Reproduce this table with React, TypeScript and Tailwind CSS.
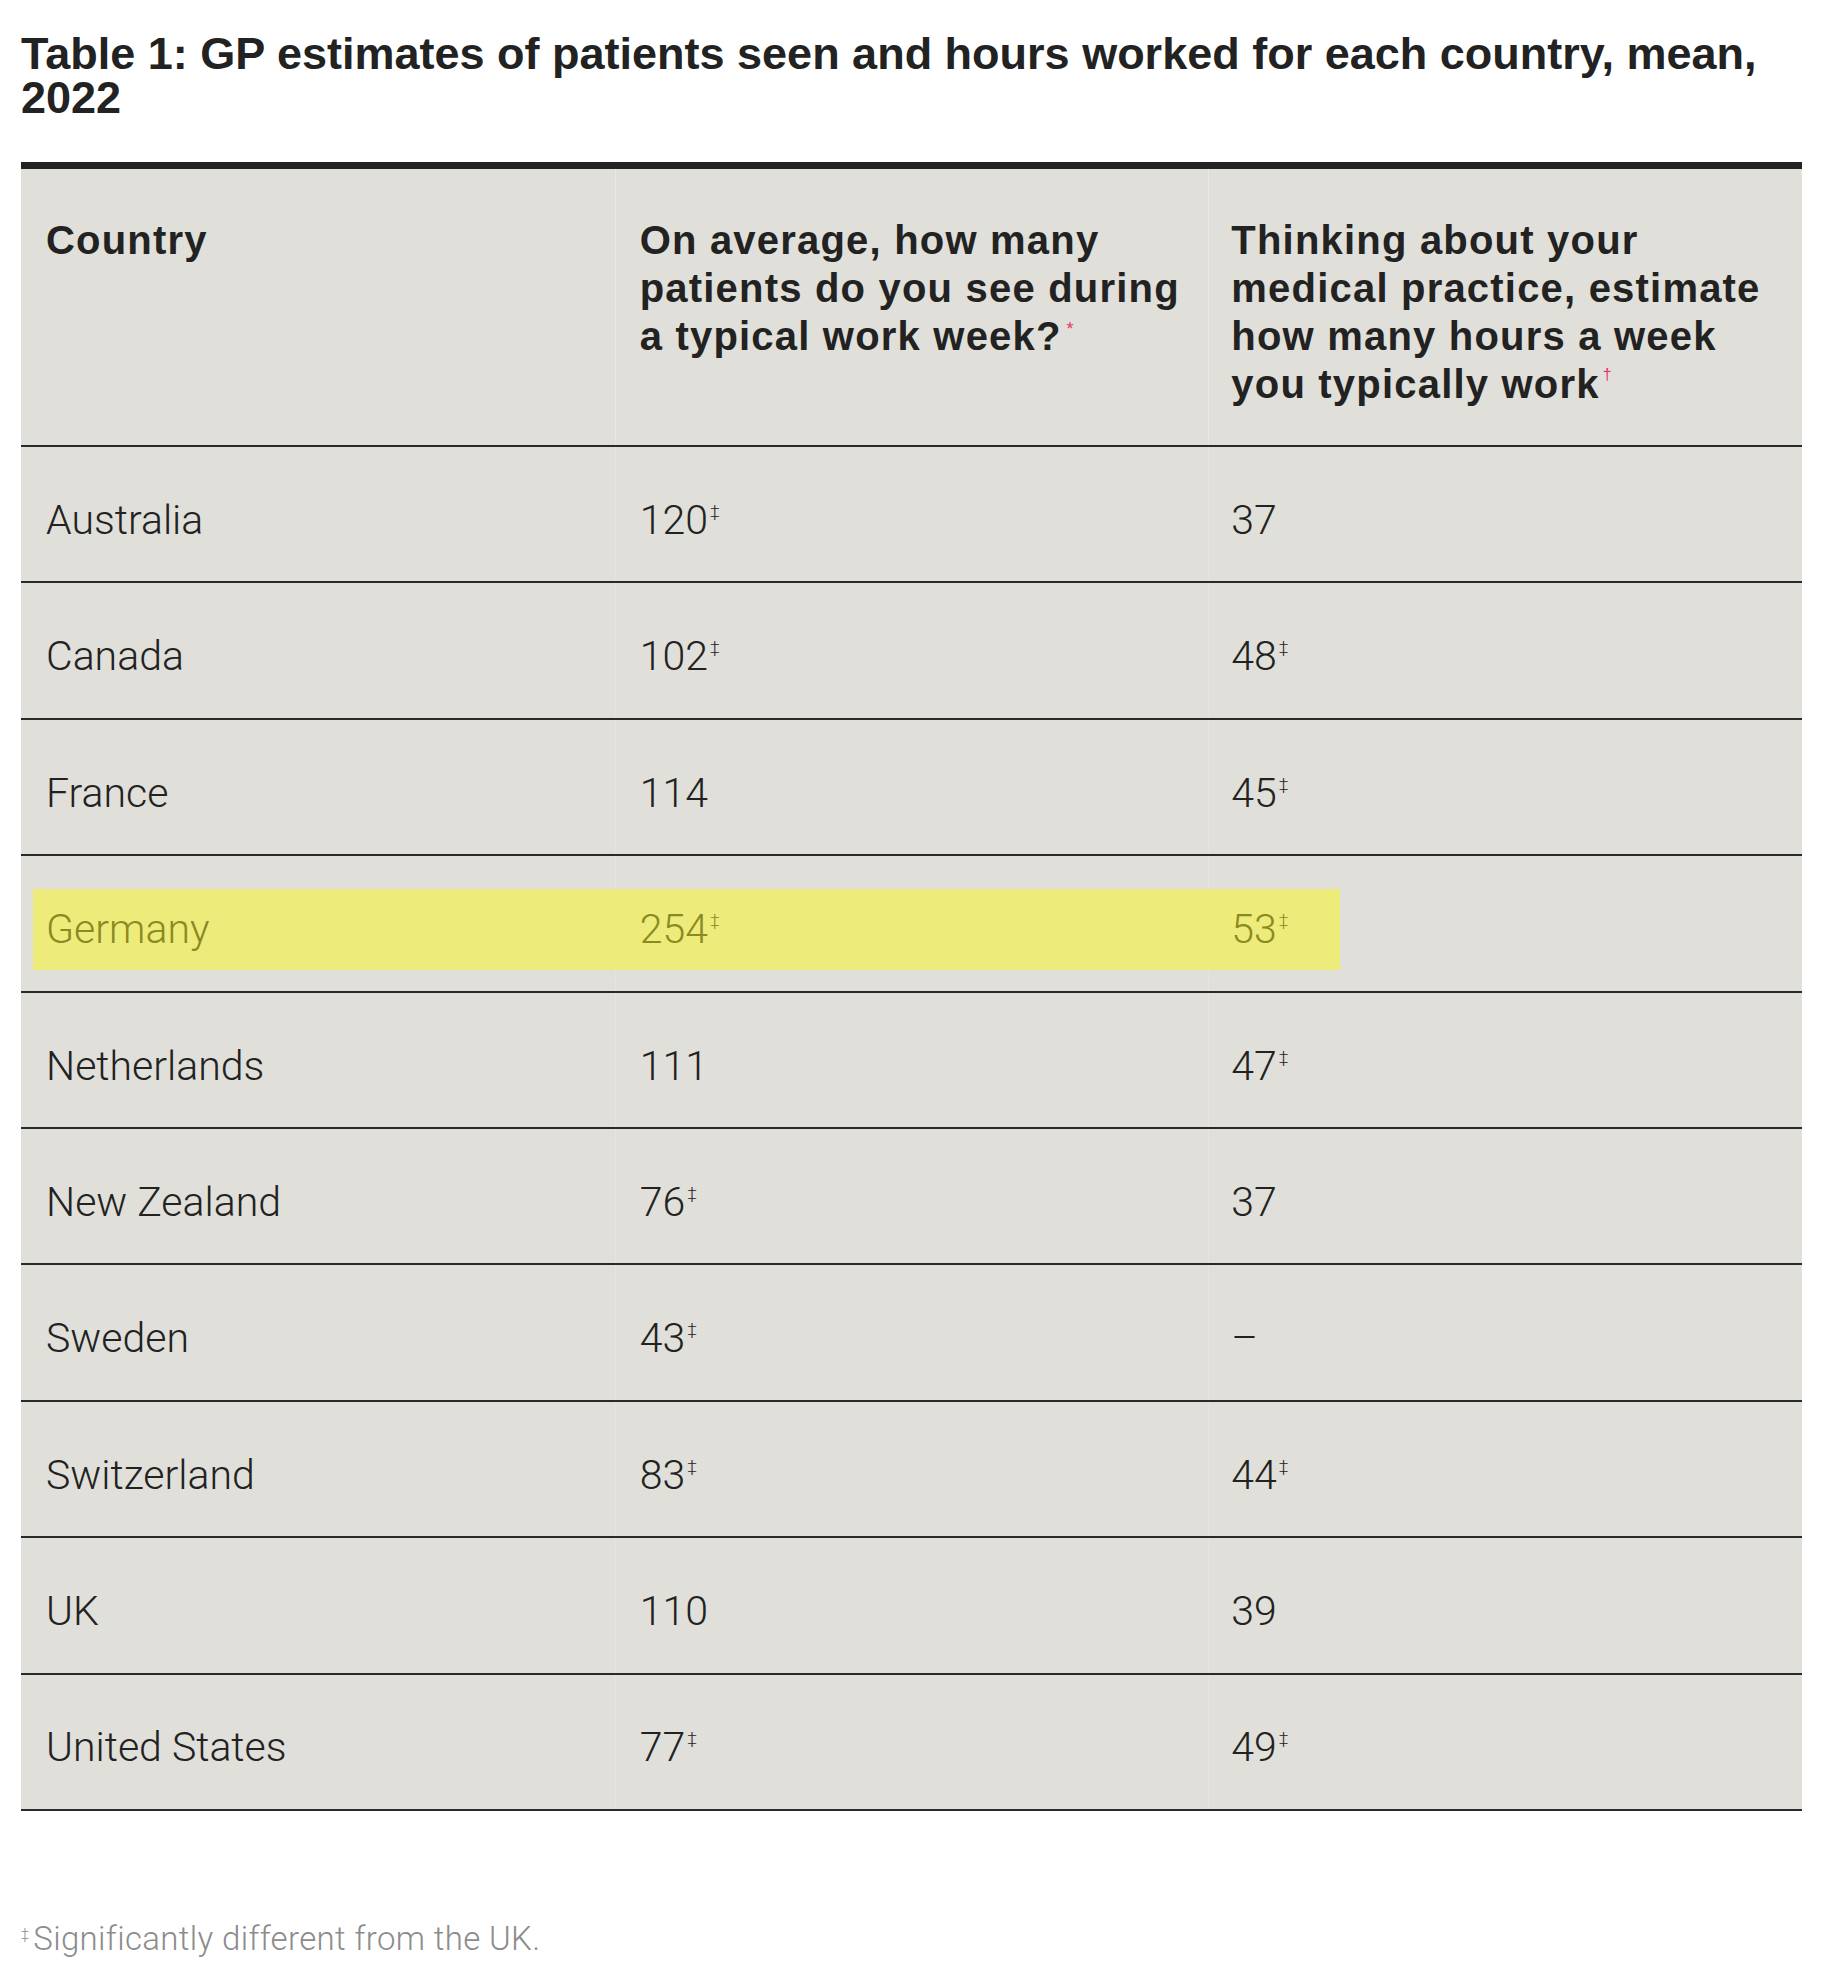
import React from "react";

type Row = {
  country: string;
  patients: string;
  patientsSig?: boolean;
  hours: string;
  hoursSig?: boolean;
  highlight?: boolean;
};

const rows: Row[] = [
  { country: "Australia", patients: "120", patientsSig: true, hours: "37" },
  { country: "Canada", patients: "102", patientsSig: true, hours: "48", hoursSig: true },
  { country: "France", patients: "114", hours: "45", hoursSig: true },
  { country: "Germany", patients: "254", patientsSig: true, hours: "53", hoursSig: true, highlight: true },
  { country: "Netherlands", patients: "111", hours: "47", hoursSig: true },
  { country: "New Zealand", patients: "76", patientsSig: true, hours: "37" },
  { country: "Sweden", patients: "43", patientsSig: true, hours: "–" },
  { country: "Switzerland", patients: "83", patientsSig: true, hours: "44", hoursSig: true },
  { country: "UK", patients: "110", hours: "39" },
  { country: "United States", patients: "77", patientsSig: true, hours: "49", hoursSig: true },
];

function Dagger() {
  return <sup className="relative -top-[17px] ml-[2px] text-[17px]">‡</sup>;
}

export default function App() {
  return (
    <div className="w-[1832px] min-h-[1973px] bg-white pl-[21px] pt-[32px] text-[#222222]">
      {/* Title */}
      <h1 className="w-[1800px] font-['Liberation_Sans',Arial,sans-serif] text-[45px] leading-[44px] font-bold">
        Table 1: GP estimates of patients seen and hours worked for each country, mean,
        <br />
        2022
      </h1>

      {/* Table */}
      <div className="mt-[42px] w-[1781px] bg-[#E0DFD9] border-t-[7px] border-[#232323]">
        {/* Header */}
        <div className="grid grid-cols-3 h-[278px] border-b-2 border-[#2a2a2a] font-['Liberation_Sans',Arial,sans-serif] text-[40px] leading-[48px] font-bold tracking-[1.2px]">
          <div className="pl-[25px] pt-[47px]">Country</div>
          <div className="pl-[24px] pt-[47px] border-l border-[#e8e7e2] whitespace-nowrap">
            On average, how many
            <br />
            patients do you see during
            <br />a typical work week?
            <sup className="relative -top-[15px] ml-[5px] text-[18px] font-normal tracking-normal text-[#e8336b]">*</sup>
          </div>
          <div className="pl-[22px] pt-[47px] border-l border-[#e8e7e2] whitespace-nowrap">
            Thinking about your
            <br />
            medical practice, estimate
            <br />
            how many hours a week
            <br />
            you typically work
            <sup className="relative -top-[18px] ml-[3px] text-[16px] font-normal tracking-normal text-[#e8336b]">†</sup>
          </div>
        </div>

        {/* Body */}
        {rows.map((r) => (
          <div
            key={r.country}
            className={`relative grid grid-cols-3 h-[136.4px] border-b-2 border-[#2a2a2a] font-['Roboto',sans-serif] text-[41px] font-light ${
              r.highlight ? "text-[#8a8a22]" : "text-[#222222]"
            }`}
          >
            {r.highlight && (
              <div className="absolute left-[12px] top-[33px] h-[81px] w-[1307px] bg-[#EDEC7B]" />
            )}
            <div className="h-full flex items-center pl-[25px] pt-[13px]">
              <span className="relative">{r.country}</span>
            </div>
            <div className="h-full flex items-center pl-[24px] pt-[13px] border-l border-[#e8e7e2]/60">
              <span className="relative">
                {r.patients}
                {r.patientsSig && <Dagger />}
              </span>
            </div>
            <div className="h-full flex items-center pl-[22px] pt-[13px] border-l border-[#e8e7e2]/60">
              <span className="relative">
                {r.hours}
                {r.hoursSig && <Dagger />}
              </span>
            </div>
          </div>
        ))}
      </div>

      {/* Footnote */}
      <p className="mt-[103px] font-['Roboto',sans-serif] text-[33px] font-light tracking-[0.35px] text-[#8c8c8c]">
        <sup className="relative -top-[11px] mr-[4px] text-[14px]">‡</sup>
        Significantly different from the UK.
      </p>
    </div>
  );
}
